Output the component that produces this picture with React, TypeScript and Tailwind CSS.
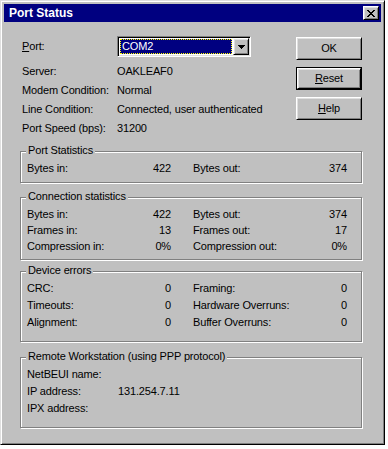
import { Fragment, type ReactNode } from "react";

const raised =
  "border border-t-white border-l-white border-r-black border-b-black shadow-[inset_1px_1px_0_#dfdfdf,inset_-1px_-1px_0_#808080]";

function GroupBox({ title, className, children }: { title: string; className: string; children: ReactNode }) {
  return (
    <div className={`relative border border-[#808080] shadow-[inset_1px_1px_0_#fff,1px_1px_0_#fff] ${className}`}>
      <span className="absolute -top-[8px] left-[5px] bg-[#c0c0c0] px-[2px] leading-[13px]">{title}</span>
      {children}
    </div>
  );
}

type Row = [string, string, string, string];

function StatGrid({ rows, rowClass }: { rows: Row[]; rowClass: string }) {
  return (
    <div className="grid grid-cols-[144px_154px] gap-x-[22px] pl-[6px]">
      {rows.map(([a, av, b, bv]) => (
        <Fragment key={a}>
          <div className={`flex items-center justify-between ${rowClass}`}>
            <span>{a}</span>
            <span>{av}</span>
          </div>
          <div className={`flex items-center justify-between ${rowClass}`}>
            <span>{b}</span>
            <span>{bv}</span>
          </div>
        </Fragment>
      ))}
    </div>
  );
}

function CloseGlyph() {
  const px = [
    [0, 0], [1, 0], [6, 0], [7, 0],
    [1, 1], [2, 1], [5, 1], [6, 1],
    [2, 2], [3, 2], [4, 2], [5, 2],
    [3, 3], [4, 3],
    [2, 4], [3, 4], [4, 4], [5, 4],
    [1, 5], [2, 5], [5, 5], [6, 5],
    [0, 6], [1, 6], [6, 6], [7, 6],
  ];
  return (
    <svg width="8" height="7" viewBox="0 0 8 7" shapeRendering="crispEdges">
      {px.map(([x, y]) => (
        <rect key={`${x}-${y}`} x={x} y={y} width="1" height="1" fill="#000" />
      ))}
    </svg>
  );
}

function ArrowGlyph() {
  return (
    <svg width="7" height="4" viewBox="0 0 7 4" shapeRendering="crispEdges">
      <rect x="0" y="0" width="7" height="1" fill="#000" />
      <rect x="1" y="1" width="5" height="1" fill="#000" />
      <rect x="2" y="2" width="3" height="1" fill="#000" />
      <rect x="3" y="3" width="1" height="1" fill="#000" />
    </svg>
  );
}

const info: [string, string][] = [
  ["Server:", "OAKLEAF0"],
  ["Modem Condition:", "Normal"],
  ["Line Condition:", "Connected, user authenticated"],
  ["Port Speed (bps):", "31200"],
];

export default function App() {
  return (
    <div className="h-[449px] w-[388px] bg-white font-['Liberation_Sans',Arial,sans-serif] text-[11px] leading-[13px] tracking-[-0.15px] text-black">
      <div className="flex h-[445px] w-[385px] flex-col border border-t-[#dfdfdf] border-l-[#dfdfdf] border-r-black border-b-black bg-[#c0c0c0] p-[3px] shadow-[inset_1px_1px_0_#fff,inset_-1px_-1px_0_#808080]">
        <div className="flex h-[18px] items-center justify-between bg-[#000080] pl-[5px] pr-[2px]">
          <span className="text-[12px] font-bold tracking-normal text-white">Port Status</span>
          <button type="button" className={`flex h-[14px] w-[16px] items-center justify-center bg-[#c0c0c0] ${raised}`}>
            <CloseGlyph />
          </button>
        </div>

        <div className="flex flex-col pl-[16px] pr-[19px] pt-[14px]">
          <div className="flex justify-between">
            <div className="flex flex-col pl-[2px]">
              <div className="flex h-[21px] items-center">
                <span className="w-[95px]">
                  <span className="underline">P</span>ort:
                </span>
                <div className="flex h-[21px] w-[134px] border border-[#808080] border-r-white border-b-white bg-white p-[1px] shadow-[inset_1px_1px_0_#000,inset_-1px_-1px_0_#dfdfdf]">
                  <div className="m-[1px] flex flex-1 items-center border border-dotted border-[#ffff00] bg-[#000080] pl-[1px] text-white">
                    COM2
                  </div>
                  <div className={`flex w-[16px] items-center justify-center bg-[#c0c0c0] ${raised}`}>
                    <ArrowGlyph />
                  </div>
                </div>
              </div>
              <div className="mt-[5px] flex flex-col">
                {info.map(([k, v]) => (
                  <div key={k} className="flex h-[19px] items-center">
                    <span className="w-[95px]">{k}</span>
                    <span>{v}</span>
                  </div>
                ))}
              </div>
            </div>
            <div className="flex w-[66px] flex-col gap-[7px] pt-[1px]">
              <button type="button" className={`h-[23px] bg-[#c0c0c0] ${raised}`}>OK</button>
              <div className="h-[23px] border border-black">
                <button type="button" className={`h-full w-full bg-[#c0c0c0] ${raised}`}>
                  <span className="underline">R</span>eset
                </button>
              </div>
              <button type="button" className={`h-[23px] bg-[#c0c0c0] ${raised}`}>
                <span className="underline">H</span>elp
              </button>
            </div>
          </div>

          <GroupBox title="Port Statistics" className="mt-[13px] pb-[6px] pt-[8px]">
            <StatGrid rowClass="h-[16px]" rows={[["Bytes in:", "422", "Bytes out:", "374"]]} />
          </GroupBox>

          <GroupBox title="Connection statistics" className="mt-[14px] pb-[5px] pt-[8px]">
            <StatGrid
              rowClass="h-[16px]"
              rows={[
                ["Bytes in:", "422", "Bytes out:", "374"],
                ["Frames in:", "13", "Frames out:", "17"],
                ["Compression in:", "0%", "Compression out:", "0%"],
              ]}
            />
          </GroupBox>

          <GroupBox title="Device errors" className="mt-[11px] pb-[10px] pt-[8px]">
            <StatGrid
              rowClass="h-[17px]"
              rows={[
                ["CRC:", "0", "Framing:", "0"],
                ["Timeouts:", "0", "Hardware Overruns:", "0"],
                ["Alignment:", "0", "Buffer Overruns:", "0"],
              ]}
            />
          </GroupBox>

          <GroupBox title="Remote Workstation (using PPP protocol)" className="mt-[15px] pb-[10px] pt-[8px]">
            <div className="flex flex-col pl-[6px]">
              {[
                ["NetBEUI name:", ""],
                ["IP address:", "131.254.7.11"],
                ["IPX address:", ""],
              ].map(([k, v]) => (
                <div key={k} className="flex h-[17px] items-center">
                  <span className="w-[91px]">{k}</span>
                  <span>{v}</span>
                </div>
              ))}
            </div>
          </GroupBox>
        </div>
      </div>
    </div>
  );
}
